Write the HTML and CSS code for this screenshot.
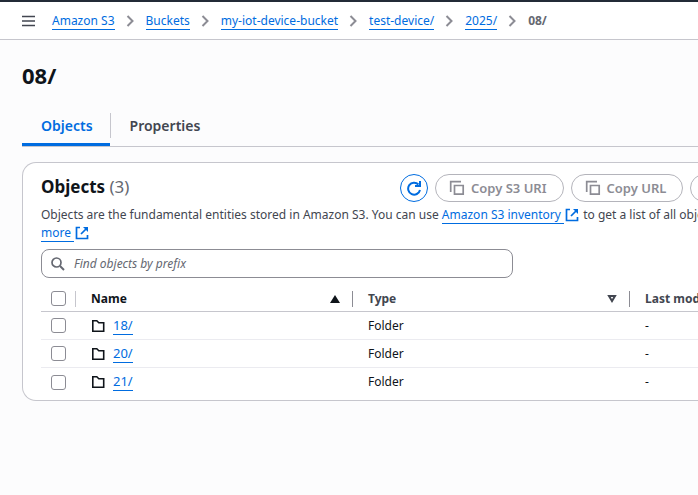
FILE: index.html
```html
<!DOCTYPE html>
<html lang="en">
<head>
<meta charset="utf-8">
<title>08/ - Amazon S3</title>
<link rel="stylesheet" href="styles.css">
</head>
<body>
<svg class="sprite" aria-hidden="true">
  <symbol id="chevron" viewBox="0 0 8 12"><path d="M1 1l5 5-5 5" fill="none" stroke="currentColor" stroke-width="2"/></symbol>
  <symbol id="external" viewBox="0 0 14 14"><path d="M5 1.500H1.500v11h11V9" fill="none" stroke="currentColor" stroke-width="1.700"/><path d="M11.500 2.500L6 8" fill="none" stroke="currentColor" stroke-width="1.700"/><path d="M8 1h5v5z" fill="currentColor"/></symbol>
  <symbol id="copy" viewBox="0 0 16 16"><path d="M1.700 12V1.700H12M5.500 5.500h8.700v8.700H5.500z" fill="none" stroke="currentColor" stroke-width="1.700"/></symbol>
  <symbol id="folder" viewBox="0 0 14 14"><path d="M1.800 1.800h4l2 2h4.900v8.400H1.800z" fill="none" stroke="currentColor" stroke-width="1.600"/></symbol>
</svg>
<header class="topbar">
  <button class="menu" type="button" aria-label="Open navigation">
    <svg width="14" height="14" viewBox="0 0 14 14"><path d="M0 2.500h13M0 7h13M0 11.500h13" stroke="currentColor" stroke-width="1.600"/></svg>
  </button>
  <nav class="crumbs" aria-label="Breadcrumbs">
    <a class="link" href="#">Amazon S3</a>
    <svg class="chevron"><use href="#chevron"/></svg>
    <a class="link" href="#">Buckets</a>
    <svg class="chevron"><use href="#chevron"/></svg>
    <a class="link" href="#">my-iot-device-bucket</a>
    <svg class="chevron"><use href="#chevron"/></svg>
    <a class="link" href="#">test-device/</a>
    <svg class="chevron"><use href="#chevron"/></svg>
    <a class="link" href="#">2025/</a>
    <svg class="chevron"><use href="#chevron"/></svg>
    <span class="current">08/</span>
  </nav>
</header>
<main class="page">
  <h1 class="title">08/</h1>
  <div class="tabs" role="tablist">
    <button class="tab active" type="button" role="tab" aria-selected="true">Objects</button>
    <span class="divider"></span>
    <button class="tab" type="button" role="tab" aria-selected="false">Properties</button>
  </div>
  <section class="panel">
    <div class="panel-head">
      <h2 class="heading">Objects <span class="count">(3)</span></h2>
      <div class="actions">
        <button class="btn refresh" type="button" aria-label="Refresh">
          <svg width="16" height="16" viewBox="0 0 16 16"><path d="M14 10A6 6 0 1 1 12.500 4.500" fill="none" stroke="currentColor" stroke-width="2"/><path d="M14 1v5H9" fill="none" stroke="currentColor" stroke-width="2"/></svg>
        </button>
        <button class="btn" type="button" disabled><svg class="copy"><use href="#copy"/></svg>Copy S3 URI</button>
        <button class="btn" type="button" disabled><svg class="copy"><use href="#copy"/></svg>Copy URL</button>
        <button class="btn" type="button" disabled>Download</button>
      </div>
    </div>
    <p class="intro">Objects are the fundamental entities stored in Amazon S3. You can use <a class="ext" href="#"><span class="link">Amazon S3 inventory&nbsp;</span><svg class="external"><use href="#external"/></svg></a> to get a list of all objects<br><a class="ext" href="#"><span class="link">more&nbsp;</span><svg class="external"><use href="#external"/></svg></a></p>
    <label class="search">
      <svg width="14" height="14" viewBox="0 0 14 14"><path d="M9 9l4 4" stroke="currentColor" stroke-width="2"/><circle cx="5.500" cy="5.500" r="4.500" fill="none" stroke="currentColor" stroke-width="1.700"/></svg>
      <input type="search" placeholder="Find objects by prefix" aria-label="Find objects by prefix">
    </label>
    <table class="objects">
      <colgroup><col class="col-check"><col class="col-wide"><col class="col-wide"><col></colgroup>
      <thead>
        <tr>
          <th><div class="th light"><input class="check" type="checkbox" aria-label="Select all"></div></th>
          <th class="sorted"><div class="th">Name<svg width="10" height="8" viewBox="0 0 10 8"><path d="M5 0l5 8H0z" fill="currentColor"/></svg></div></th>
          <th><div class="th">Type<svg width="10" height="8" viewBox="0 0 10 8"><path d="M2 1h6L5 6z" fill="none" stroke="currentColor" stroke-width="2"/></svg></div></th>
          <th><div class="th last">Last modified</div></th>
        </tr>
      </thead>
      <tbody>
        <tr><td><input class="check" type="checkbox" aria-label="Select 18/"></td><td><div class="name"><svg class="folder"><use href="#folder"/></svg><a class="link" href="#">18/</a></div></td><td>Folder</td><td>-</td></tr>
        <tr><td><input class="check" type="checkbox" aria-label="Select 20/"></td><td><div class="name"><svg class="folder"><use href="#folder"/></svg><a class="link" href="#">20/</a></div></td><td>Folder</td><td>-</td></tr>
        <tr><td><input class="check" type="checkbox" aria-label="Select 21/"></td><td><div class="name"><svg class="folder"><use href="#folder"/></svg><a class="link" href="#">21/</a></div></td><td>Folder</td><td>-</td></tr>
      </tbody>
    </table>
  </section>
</main>
</body>
</html>
```
FILE: styles.css
```css
* { box-sizing: border-box; }
body {
  margin: 0;
  min-height: 100vh;
  overflow-x: hidden;
  background: #fcfcfd;
  color: #0f141a;
  font: 12px/18px "Noto Sans", "Open Sans", sans-serif;
}
button, input { font: inherit; color: inherit; }
button { padding: 0; border: 0; background: none; }
svg { display: block; flex: none; }
.sprite { display: none; }

.topbar {
  display: flex;
  align-items: center;
  gap: 16px;
  height: 40px;
  padding-left: 22px;
  background: #fff;
  border-top: 2px solid #232b37;
  border-bottom: 1px solid #c6c6cd;
}
.menu { color: #424650; }
.crumbs { display: flex; align-items: center; gap: 11px; white-space: nowrap; }
.chevron { width: 9px; height: 12px; color: #8c8c94; }
.current { color: #656871; font-weight: 700; }
.link {
  color: #006ce0;
  text-decoration: none;
  line-height: 17px;
  border-bottom: 1px solid #006ce0;
}

.page { padding-left: 22px; }
.title { margin: 0; padding: 20px 0; font-size: 22px; line-height: 30px; font-weight: 700; }
.tabs { display: flex; height: 37px; border-bottom: 1px solid #c6c6cd; }
.tab {
  padding: 0 19px 2px;
  height: 36px;
  color: #424650;
  font-size: 14px;
  line-height: 20px;
  font-weight: 600;
  border-bottom: 3px solid transparent;
}
.tab.active { padding: 0 17px 2px 19px; color: #006ce0; border-color: #006ce0; }
.divider { width: 1px; height: 25px; margin-top: 3px; background: #c6c6cd; }

.panel {
  margin-top: 15px;
  padding: 11px 0 4px 18px;
  background: #fff;
  border: 1px solid #c6c6cd;
  border-right: 0;
  border-radius: 14px 0 0 14px;
  overflow: hidden;
}
.panel-head { display: flex; height: 28px; }
.heading { flex: 0 0 359px; margin: 0; font-size: 17px; line-height: 26px; font-weight: 700; }
.count { color: #656871; font-weight: 400; }
.actions { display: flex; flex: none; gap: 7px; }
.btn {
  display: flex;
  align-items: center;
  gap: 6px;
  height: 28px;
  padding: 0 16px 0 13px;
  border: 1px solid #b4b4bb;
  border-radius: 14px;
  color: #8c8c94;
  font-size: 13px;
  font-weight: 600;
  white-space: nowrap;
}
.btn.refresh { width: 28px; padding: 0; justify-content: center; color: #006ce0; border-color: #006ce0; }
.copy { width: 16px; height: 16px; }
.intro { margin: 4px 0 0; color: #424650; white-space: nowrap; }
.ext { color: #006ce0; text-decoration: none; }
.external { display: inline-block; width: 14px; height: 14px; margin: 0 1px; vertical-align: -3px; }

.search {
  display: flex;
  align-items: center;
  gap: 9px;
  width: 472px;
  height: 29px;
  margin-top: 7px;
  padding: 0 9px;
  border: 1px solid #8c8c94;
  border-radius: 8px;
  color: #656871;
}
.search input { flex: 1; padding: 0; border: 0; outline: 0; background: none; }
.search input::placeholder { color: #656871; font-style: italic; opacity: 1; }

.objects { width: 100%; margin-top: 8px; border-collapse: separate; border-spacing: 0; table-layout: fixed; white-space: nowrap; }
.col-check { width: 35px; }
.col-wide { width: 277px; }
th, td { height: 28px; padding: 0 0 0 15px; text-align: left; font-weight: 400; border-bottom: 1px solid #ebebf0; }
th { height: 26px; border-color: #c6c6cd; color: #424650; }
tbody tr:last-child td { border-bottom: 0; }
th:first-child, td:first-child { padding-left: 10px; }
.th {
  display: flex;
  align-items: center;
  justify-content: space-between;
  height: 16px;
  padding-right: 12px;
  font-weight: 700;
  border-right: 1px solid #8c8c94;
}
.th.light { padding: 0; border-color: #c6c6cd; }
.th.last { border: 0; }
th.sorted { color: #0f141a; }
.check { display: block; appearance: none; width: 15px; height: 15px; margin: 0; border: 1px solid #8c8c94; border-radius: 3px; background: #fff; }
.name { display: flex; align-items: center; gap: 8px; }
.name .link { font-size: 13px; }
.folder { width: 14px; height: 14px; }
```
